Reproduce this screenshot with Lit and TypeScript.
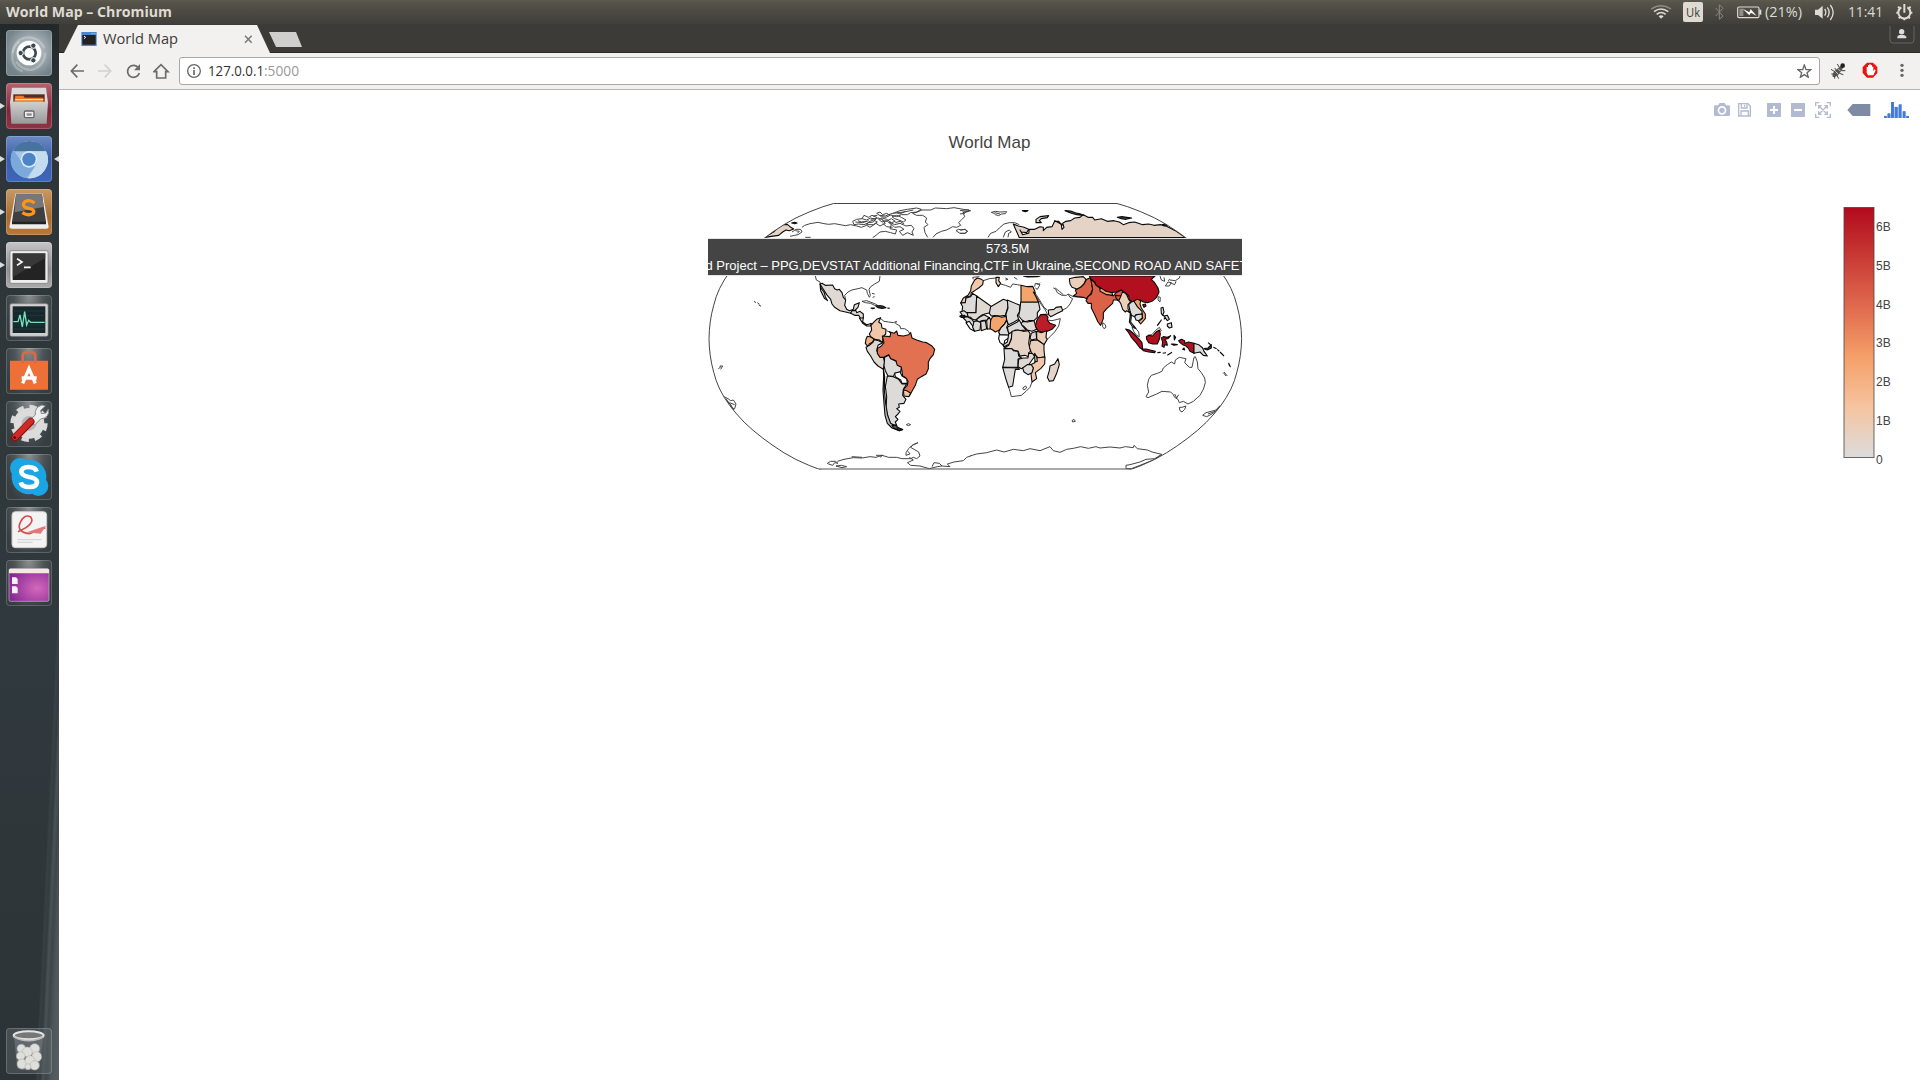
import { LitElement, html, svg, css } from "lit";
import { customElement } from "lit/decorators.js";

/* Robinson projection outline table, every 5 degrees of latitude. */
const RX = [1, .9986, .9954, .99, .9822, .973, .96, .9427, .9216, .8962, .8679, .835, .7986, .7597, .7186, .6732, .6213, .5722, .5322];
const RY = [0, .062, .124, .186, .248, .31, .372, .434, .4958, .5571, .6176, .6769, .7346, .7903, .8435, .8936, .9394, .9761, 1];

function frame(cx: number, cy: number, rx: number, ry: number) {
  const pts: string[] = [];
  for (let i = 18; i >= 0; i--) pts.push(`${cx - rx * RX[i]},${cy - ry * RY[i]}`);
  for (let i = 1; i <= 18; i++) pts.push(`${cx - rx * RX[i]},${cy + ry * RY[i]}`);
  for (let i = 18; i >= 0; i--) pts.push(`${cx + rx * RX[i]},${cy + ry * RY[i]}`);
  for (let i = 1; i <= 18; i++) pts.push(`${cx + rx * RX[i]},${cy - ry * RY[i]}`);
  return "M" + pts.join("L") + "Z";
}
const GLOBE = frame(975.3, 338.7, 266.3, 135.2);

const G = "#dcdbd9", L = "#dfd8d3", P = "#e5d3c6", N = "#eccfb9", K = "#f0c7a8", O = "#f5a46c", R = "#b2101e", I = "#db6147";
type Shape = [string, string];

const americas: Shape[] = [
  [L, "M360,42L366,40 376,46 398,45 404,56 412,60 418,58 426,68 430,82 437,90 434,106 440,118 448,122 460,118 463,104 478,98 474,112 466,120 456,124 452,130 440,127 420,122 404,112 396,102 392,88 380,74 370,58Z"],
  [L, "M360,42L364,56 372,66 376,80 383,92 374,86 368,74 362,62Z"],
  [L, "M452,130L456,122 468,122 470,128 480,124 490,132 490,144 482,146 476,136 464,136Z"],
  [G, "M478,144L490,144 488,156 500,164 508,162 514,160 512,168 500,168 488,160Z"],
  [K, "M513,166L520,158 530,148 542,143 536,156 544,162 546,174 558,178 557,192 549,200 548,218 538,210 524,208 512,200 508,192 515,180Z"],
  ["#f2b17e", "M502,199L512,201 522,207 518,216 508,222 504,230 496,220 498,208Z"],
  [L, "M498,232L508,226 518,218 523,209 536,212 548,218 534,226 530,242 540,258 550,262 554,276 550,298 534,288 522,276 512,258 502,244Z"],
  ["#e17150", "M547,198L570,200 572,190 568,185 582,190 590,183 594,196 610,198 626,194 632,188 636,204 650,210 668,216 680,218 696,228 704,238 700,254 690,266 685,276 685,296 678,312 664,320 652,328 646,346 636,364 628,378 620,368 610,358 622,346 624,334 618,324 608,318 606,304 604,292 590,286 588,272 572,266 566,254 552,262 540,262 532,250 532,236 544,228 552,218Z"],
  [G, "M554,262L566,256 572,266 588,274 592,286 604,292 602,306 584,310 580,320 564,318 556,302 552,288Z"],
  ["#fff", "M584,310L600,305 606,318 620,326 622,340 606,340 602,330 586,320Z"],
  [K, "M610,360L620,362 632,370 626,380 612,378Z"],
  [G, "M562,318L580,320 596,328 606,342 620,342 610,358 608,376 618,388 612,400 596,402 598,412 590,416 600,424 594,432 586,440 594,448 586,456 590,466 572,464 564,440 558,420 560,380 556,350Z"],
  ["#bbb", "M550,296L554,320 553,360 557,400 563,436 572,460 586,468 608,479 598,482 576,474 562,460 555,436 552,400 549,360 551,320Z"],
  ["#555", "M576,466L590,466 592,476 608,478 598,482 580,474Z"],
  ["#444", "M528,109L538,107 548,108 558,113 546,115 534,113ZM513,114L524,114 518,116ZM562,114L569,115"],
];
const americasCoast = [
  "M346,18L349,30 360,36 362,43M437,90L434,76 444,66 456,60 474,56 486,53 500,60 502,70 508,82 511,76 507,58 512,50 524,42 538,34 540,18",
  "M486,94L500,92 516,98 526,102 536,108 524,106 512,100 496,98ZM516,70L524,72M518,82L524,80",
  "M540,144L552,154 566,156 580,158 590,154 586,160 600,168 602,176 614,176 626,184 628,190M536,156L538,166 546,170M568,186L560,182",
  "M162,94L168,98M172,98L178,102M176,104L182,108 178,106M55,296L61,292 60,288 68,288 62,298",
  "M72,380L84,386 92,392 100,390 108,402 104,416 98,416 92,404 80,392M88,398L104,404M78,386L102,420",
  "M619,464L625,461 632,464 625,467Z",
  "M382,580L392,574 406,574 414,580 404,578 398,586 386,582ZM412,574L432,568 460,563 486,564 510,560 528,562 546,556 566,562 590,562 606,566 632,566 640,562 650,566 660,558 656,546 642,538 632,532 640,524 654,518M654,518L636,526 626,536 618,548 618,556 630,552 624,544M628,562L640,570 622,578 632,586 660,588 688,596 712,590 726,588 718,580 702,578 696,590M726,588L750,590 742,582 762,576 790,572 800,562 812,558",
  "M408,588L424,586 440,590 426,593ZM455,560L486,562M528,556L548,556 540,562",
];

const arctic = [
  "M270,139L284,136 294,134 306,126 302,118 288,118 276,126M286,122L298,124 292,130M306,112L314,106 330,101 354,97 372,101 386,103 404,101 420,104 436,107 452,104 470,108 484,112 500,106 510,112 528,100 540,108 556,100 548,92 562,94 574,104 570,116 590,120 586,132 572,128 556,124 540,126 528,136 518,143",
  "M458,94L470,88 486,86 500,90 512,84 526,88 520,96 506,98 492,104 476,102 462,104ZM486,86L492,76 506,82 516,76 530,82 526,90M530,70L540,66 548,74 560,70 570,76 558,82 544,80ZM506,96L500,104 520,104 532,96 520,90ZM536,88L546,96 562,92 574,86 586,94 574,98 560,88 546,84ZM576,80L590,76 604,82 618,90 610,96 596,90 584,86ZM568,96L584,104 600,100 618,108 634,106 642,116 636,126 640,136 622,128 608,136 598,124 612,118 600,110 584,112Z",
  "M566,74L584,68 600,62 622,58 650,54 664,58 650,66 632,68 622,74 604,74 590,80 576,76ZM580,70L612,66 640,60M512,88L534,84 550,90M466,96L488,98 506,92M540,76L556,78 566,74M548,100L560,110 578,112M586,98L600,94 612,102M520,78L532,76M590,68L600,72 616,64M474,92L484,96 498,94",
  "M683,142L675,128 672,112 684,104 676,96 680,84 668,76 650,76 638,70 652,66 666,60 692,60 706,54 740,56 762,53 790,58 812,62 800,66 790,70 794,80 786,88 776,98 782,106 770,112 758,110 740,120 724,124 708,132 699,142",
  "M768,122L775,118 784,120 796,118 803,124 796,130 780,130ZM316,142L332,142",
];

const north: Shape[] = [
  [P, "M160,102L175,108 192,112 206,118 200,128 184,126 180,120 188,134 206,130 208,118 224,118 240,110 250,112 250,122 260,112 276,110 284,94 296,94 304,104 306,118 312,112 308,100 318,94 332,92 344,84 360,82 370,74 384,82 398,82 404,90 424,86 442,94 462,92 478,96 490,104 506,98 524,96 548,104 566,102 582,106 602,104 618,108 646,122 676,143H178L166,116Z"],
  [P, "M228,98L228,88 240,80 266,77 262,83 244,86 238,92 244,98Z"],
  ["#555", "M315,62L332,63 346,68 362,72 370,76 350,74 334,70ZM472,82L486,80 500,82 515,84 498,88 484,86ZM187,62L204,62 196,65ZM284,92L296,98 310,106 300,100Z"],
  ["#444", "M606,104L618,102 622,106 612,108Z"],
];
const northCoast = [
  "M84,142L92,130 108,124 118,114 132,102 148,98 164,98 178,104M130,142L136,126 148,120 154,126 146,130 144,142M94,67L106,64 120,66 140,65 136,71 124,72 116,77 106,74 102,70ZM104,68L120,72",
  "M616,142L624,136 632,140M634,136L644,136 650,142M0,62L26,59 24,64 8,66 14,70 0,72M0,120L14,118 22,124 14,130 0,130",
];

const africa: Shape[] = [
  [K, "M104,30L112,24 124,28 130,32 128,44 116,54 104,62 94,68 92,78 78,82 76,98 62,99 70,84 84,76 92,62 94,48Z"],
  [G, "M62,99L76,98 78,84 92,80 98,70 110,78 108,128 82,128 66,124 68,110Z"],
  [L, "M110,78L152,108 155,112 150,128 134,132 124,136 116,142 108,150 98,148 92,142 82,140 82,128 108,128Z"],
  [L, "M152,110L166,102 190,88 202,92 204,110 196,136 180,138 164,137 154,138 148,130Z"],
  [G, "M202,90L240,106 238,126 232,136 236,148 222,156 206,164 200,152 198,132 204,114Z"],
  [G, "M242,96L295,95 300,118 292,128 292,142 282,152 266,152 256,155 246,150 236,138 240,118Z"],
  ["#e0d9d4", "M248,154L262,156 282,152 286,166 290,178 276,184 262,180 250,168 242,164Z"],
  ["#bb1c27", "M302,134L318,133 324,142 322,150 330,160 347,166 336,178 322,184 308,187 294,182 286,168 290,152 296,142Z"],
  [O, "M150,176L152,150 158,140 172,138 186,142 198,139 200,150 192,164 184,172 178,180 166,186 158,180Z"],
  ["#fcfcfc", "M178,194L206,194 208,202 194,212 192,226 180,218 176,206Z"],
  [G, "M176,186L184,172 194,162 200,150 204,164 200,172 206,188 208,195 180,194Z"],
  [G, "M202,172L216,164 232,156 238,150 246,166 258,180 240,182 226,180 214,190 206,190Z"],
  ["#dddad7", "M206,192L216,186 216,200 208,222 192,230 190,224 202,216 204,206Z"],
  [P, "M216,184L234,180 250,184 264,182 270,190 268,206 266,220 272,244 266,248 266,260 254,256 240,258 234,244 220,240 206,236 192,234 206,226 214,208Z"],
  [G, "M192,236L216,236 220,242 234,244 236,258 244,262 234,268 234,292 188,292 194,268Z"],
  [L, "M236,268L250,264 264,264 266,250 278,250 284,260 276,270 268,282 256,290 244,296 234,290Z"],
  [N, "M290,184L304,188 320,182 318,202 322,208 312,224 296,212 290,208Z"],
  [L, "M274,190L288,184 290,206 274,210 270,204Z"],
  ["#e9ceb9", "M272,212L292,210 312,224 312,240 314,260 296,264 284,256 274,248 268,230Z"],
  [K, "M288,264L315,261 314,282 302,296 286,308 290,326 276,336 273,312 280,294 272,284 284,278Z"],
  [G, "M248,294L262,284 274,284 280,294 276,308 264,314 252,306Z"],
  ["#e3d5cc", "M284,250L290,260 292,274 286,276 284,264Z"],
  [G, "M188,292L236,294 238,298 226,298 222,322 218,348 206,352 198,328Z"],
  ["#e3d5cc", "M354,266L358,284 350,310 340,332 328,334 322,322 328,302 330,288 344,282Z"],
  ["#e6d7cf", "M325,120L342,118 348,112 364,110 368,122 352,130 332,140 326,134Z"],
  [L, "M60,126L72,122 82,130 84,140 70,138 60,140 66,134Z"],
  [G, "M68,142L82,140 96,148 104,160 98,170 90,160 82,158 76,150Z"],
  ["#fff", "M78,158L88,154 98,168 104,184 90,176Z"],
  [G, "M102,154L118,152 122,160 120,180 104,184 98,172Z"],
  [L, "M108,150L118,142 132,134 146,142 142,150 126,152 118,156Z"],
  [L, "M122,154L136,152 140,176 124,182Z"],
  [L, "M140,152L148,142 152,150 150,176 142,178Z"],
  [N, "M168,22L178,22 176,32 182,40 175,50 168,38Z"],
  [O, "M243,46L262,50 278,49 284,62 286,70 280,66 288,80 295,96H243Z"],
  [N, "M250,18H300L292,20 262,21Z"],
  ["#222", "M60,138L74,136 74,142 64,142Z"],
];
const africaCoast = [
  "M206,352L210,364 214,380 230,378 244,376 258,364 270,352 276,336M248,354L257,348 260,354 252,360Z",
  "M176,186L180,196 176,206 192,232M322,150L336,152 361,146 356,168 344,186 330,200 322,208",
  "M182,42L196,46 212,52 218,42 232,44 243,46M130,32L148,26 168,24M100,28L98,22 118,20M196,24L204,28 196,30M222,22L232,28",
  "M280,66L290,80 304,104 316,120 324,136M286,70L300,92 312,112 322,120M284,50L286,40 296,42 300,38M340,54L346,56 352,68 366,76 380,76 384,72 390,82 398,86 390,102 380,114 368,120M346,54L358,64 370,74M384,72L400,80 440,82M286,54L292,58 300,44 290,42",
];

const asia: Shape[] = [
  [R, "M88,18H285L274,28 284,38 294,54 297,66 290,82 276,94 262,98 250,96 240,90 228,92 218,96 208,90 206,78 196,68 184,60 168,66 154,68 134,62 118,52 108,46 104,36 92,28Z"],
  [N, "M28,26L46,22 70,20 78,28 72,42 62,52 52,58 36,52 30,42Z"],
  [I, "M90,24L104,38 96,46 98,58 92,72 84,80 80,86 70,82 52,80 40,78 50,70 46,60 62,52 72,42 80,28Z"],
  [I, "M92,28L104,38 108,46 120,54 134,66 152,74 160,78 168,68 184,60 190,68 182,80 176,92 170,90 160,90 158,100 140,116 130,128 130,146 122,166 114,156 104,134 94,114 94,100 84,100 78,92 84,80 94,72 98,58 96,46Z"],
  [O, "M120,52L138,64 156,68 158,76 140,74 120,64Z"],
  [I, "M166,76L184,78 184,86 176,92 168,84Z"],
  [N, "M188,64L200,74 206,88 212,96 204,104 204,116 210,128 200,122 196,126 188,118 182,100 176,92 182,80Z"],
  [O, "M220,94L232,88 242,92 240,102 244,114 256,132 256,146 242,162 236,154 248,144 246,130 236,118 228,106Z"],
  [G, "M206,104L214,96 222,94 232,110 246,124 246,132 236,136 228,134 224,140 214,136 210,122Z"],
  [G, "M224,140L230,134 246,132 247,144 236,152 228,150Z"],
  [G, "M211,126L214,140 212,156 222,168 228,176 216,168 208,156 210,142Z"],
  [R, "M248,104L256,102 258,108 252,112ZM197,177L208,180 222,192 236,206 246,218 248,238 240,234 228,218 214,202 206,188ZM245,237L258,237 270,240 286,244 284,248 266,246 250,242ZM292,248L302,247M308,250L318,248M322,256L336,247M259,200L266,196 278,198 288,186 298,180 301,192 298,208 292,222 278,222 266,218 260,208ZM304,204L310,200 322,202 332,197 324,206 314,208 320,216 322,226 314,224 312,232 306,228 308,216ZM334,222L340,222 352,224 342,226ZM342,196L347,202 343,210ZM356,212L364,208 374,212 374,220 386,216 402,220 402,250 390,244 386,236 378,228 368,224 360,218Z"],
  [G, "M402,220L416,224 428,234 432,244 442,258 430,256 420,246 402,250Z"],
  [L, "M303,114L309,112 312,126 308,136 304,130ZM312,138L322,136 328,148 322,152ZM322,162L334,158 336,172 328,174 322,168ZM308,134L316,142 312,148"],
  ["#444", "M432,236L444,234 454,224 454,234 442,240ZM444,218L452,224 454,230M460,232L470,236M472,238L478,244M480,246L492,258M506,280L511,290 508,286ZM292,166L304,150 296,162ZM368,238L372,234 374,240Z"],
];
const asiaCoast = [
  "M128,158L136,164 138,172 132,176 128,170ZM216,172L228,176 236,186 238,200 230,196 222,186ZM264,196L276,194 286,182 298,172 304,182 298,186M295,80L301,82 300,96 294,90ZM300,18L304,30 314,34 312,22M316,48L324,36 334,38 328,48ZM330,30L346,32 358,24 360,18M330,38L344,44 348,34M324,32L330,28M490,308L498,318M492,306L502,318",
  "M258,380L266,366 262,346 266,328 274,316 292,310 306,304 310,294 322,284 334,276 344,282 346,270 358,262 378,266 374,278 388,292 396,292 402,262 406,260 412,276 414,296 424,308 434,324 436,338 430,358 420,376 400,394 384,402 370,394 358,398 354,388 344,382 340,374 332,366 306,364 290,372 276,378 264,383ZM344,372L350,384 356,374",
  "M358,412L366,412 378,408 374,418 366,426 360,422ZM428,436L438,428 454,424 468,420 480,407 472,420 456,432 440,440ZM444,432L466,424M36,452L42,448 46,454 38,456Z",
  "M-270,558L-250,552 -220,548 -190,540 -168,546 -140,538 -110,542 -90,536 -60,542 -30,530 -20,542 0,547 20,538 40,535 62,530 85,535 108,530 120,534 150,531 180,534 196,530 220,533 222,526 232,536 262,540 276,546 305,553 284,566 258,568 240,576 210,584 198,586 198,596 214,596 240,586 280,570 305,555",
];

const layer = (x: number, y: number, shapes: Shape[], coast: string[]) => svg`
  <g transform="translate(${x} ${y}) scale(0.33333)">
    ${coast.map((d) => svg`<path class="coast" d=${d}></path>`)}
    ${shapes.map(([f, d]) => svg`<path class="land" fill=${f} d=${d}></path>`)}
  </g>`;

/* Text fitted to a fixed advance width. */
const label = (w: number, h: number, base: number, size: number, text: string, fill: string, weight = 400) => html`
  <svg class="label" width=${w} height=${h}><text x="0" y=${base} font-size=${size} font-weight=${weight} fill=${fill} textLength=${w} lengthAdjust="spacingAndGlyphs">${text}</text></svg>`;

const icon = (w: number, h: number, body: unknown) => html`<svg width=${w} height=${h} viewBox="0 0 ${w * 3} ${h * 3}">${body}</svg>`;

const launchers: { cls: string; run?: boolean; active?: boolean; art: unknown }[] = [
  { cls: "dash", art: svg`
    <g fill="none" stroke="#fff" stroke-opacity=".25" stroke-width="7"><path d="M20,70C20,20 90,0 115,55"></path><path d="M118,68C116,118 60,140 30,95"></path><path d="M50,125C10,110 10,60 40,35"></path></g>
    <circle cx="69" cy="69" r="37" fill="#fff"></circle><circle cx="70" cy="69" r="19" fill="none" stroke="#3b4a50" stroke-width="8"></circle>
    <g fill="#3b4a50" stroke="#fff" stroke-width="3"><circle cx="44" cy="69" r="8"></circle><circle cx="82" cy="47" r="8"></circle><circle cx="82" cy="91" r="8"></circle></g>` },
  { cls: "files", run: true, art: svg`
    <defs><linearGradient id="silver" x2="0" y2="1"><stop stop-color="#d0d0d0"></stop><stop offset="1" stop-color="#999"></stop></linearGradient></defs>
    <path d="M18,14H120L126,60H12Z" fill="#d9d9d9"></path><rect x="22" y="34" width="94" height="30" fill="#5b2a1c"></rect><path d="M24,60L28,38H52L56,44H112V60Z" fill="#e8792f"></path><path d="M28,50H112" stroke="#ffd9a5" stroke-width="4"></path>
    <path d="M12,56H126L122,122H16Z" fill="url(#silver)"></path><rect x="55" y="84" width="29" height="20" rx="4" fill="#eee" stroke="#666" stroke-width="4"></rect><rect x="62" y="91" width="15" height="7" fill="#888"></rect>` },
  { cls: "chromium", run: true, active: true, art: svg`
    <circle cx="70" cy="71" r="56" fill="#a5c6e6"></circle><path d="M20,46A56,56 0 0 1 120,46Z" fill="#47749f"></path><path d="M22,42A56,56 0 0 0 62,126L88,90L46,76Z" fill="#7ba9dc"></path><path d="M72,46L120,46A56,56 0 0 1 66,127L94,80Z" fill="#c3dcf0"></path>
    <circle cx="69" cy="70" r="25" fill="#dbe8f5"></circle><circle cx="69" cy="70" r="20" fill="#4c84c8"></circle>` },
  { cls: "sublime", run: true, art: svg`
    <path d="M28,14H110L128,114Q128,119 120,119H18Q10,119 10,114Z" fill="#eee"></path><path d="M30,16H108L120,98Q120,104 114,104H24Q18,104 18,98Z" fill="#3f3f3f"></path><path d="M30,16H108L113,54L26,70Z" fill="#777"></path><path d="M18,102H120" stroke="#222" stroke-width="7"></path>
    <path d="M86,42Q70,30 57,38Q46,49 60,56L76,60Q89,66 80,74Q66,82 49,71" fill="none" stroke="#ff9416" stroke-width="10"></path>` },
  { cls: "terminal", run: true, art: svg`
    <rect x="12" y="26" width="114" height="98" rx="5" fill="#eee" stroke="#777" stroke-width="2"></rect><rect x="20" y="34" width="98" height="80" fill="#232323"></rect><path d="M20,34H118V48L20,106Z" fill="#444" opacity=".65"></path>
    <path d="M33,50L48,60L33,70" fill="none" stroke="#fff" stroke-width="5"></path><path d="M54,76H74" stroke="#fff" stroke-width="5"></path>` },
  { cls: "glass", art: svg`
    <rect x="12" y="26" width="114" height="98" rx="5" fill="#cfcfcf" stroke="#888" stroke-width="2"></rect><rect x="20" y="34" width="98" height="80" fill="#16282b"></rect><path d="M20,48H118M20,62H118M20,90H118M20,102H118" stroke="#294044" stroke-width="2"></path>
    <path d="M22,80H36L42,60L49,96L56,50L62,90L68,76L74,82H116" fill="none" stroke="#6fe3c0" stroke-width="4"></path>` },
  { cls: "glass", art: svg`
    <path d="M12,38H126V125H12Z" fill="#ec7038"></path><path d="M50,46V24Q50,12 69,12Q88,12 88,24V46" fill="none" stroke="#d96a45" stroke-width="8"></path>
    <path d="M50,106L69,62L88,106M47,90H92" fill="none" stroke="#fff" stroke-width="10"></path>` },
  { cls: "glass", art: svg`
    <circle cx="69" cy="67" r="46" fill="#d9d9d9" stroke="#d9d9d9" stroke-width="20" stroke-dasharray="20 16.1"></circle><circle cx="69" cy="67" r="44" fill="#dcdcdc"></circle><circle cx="69" cy="67" r="22" fill="#b6b6b6"></circle>
    <path d="M70,58L88,42Q84,20 108,12L118,15L104,28L106,38L120,36L127,24Q132,50 104,54L86,72Z" fill="#eee" stroke="#888" stroke-width="3"></path><path d="M27,110L74,62" stroke="#8c1010" stroke-width="23" stroke-linecap="round"></path><path d="M27,109L74,61" stroke="#cf2a24" stroke-width="17" stroke-linecap="round"></path><circle cx="26" cy="110" r="4" fill="#500"></circle>` },
  { cls: "glass", art: svg`
    <circle cx="69" cy="69" r="52" fill="#1aa5e5"></circle><circle cx="42" cy="42" r="30" fill="#1aa5e5"></circle><circle cx="97" cy="96" r="30" fill="#1aa5e5"></circle>
    <path d="M92,53Q88,39 68,39Q47,39 46,53Q46,64 69,69Q93,73 93,85Q91,99 70,99Q48,99 44,85" fill="none" stroke="#fff" stroke-width="14"></path>` },
  { cls: "glass", art: svg`
    <rect x="18" y="14" width="104" height="108" rx="10" fill="#f3f3f3" stroke="#ccc" stroke-width="3"></rect><path d="M34,98H106M34,106H80" stroke="#d5d5d5" stroke-width="4"></path>
    <path d="M36,74Q90,50 74,30Q56,20 44,44Q28,74 70,80L118,62" fill="none" stroke="#d8494d" stroke-width="5"></path><path d="M62,76L120,56L104,80Z" fill="#e4777a"></path>` },
  { cls: "glass", art: svg`
    <defs><radialGradient id="violet" cx=".7" cy=".6" r=".8"><stop stop-color="#d568bb"></stop><stop offset="1" stop-color="#7d2290"></stop></radialGradient></defs>
    <rect x="9" y="26" width="120" height="98" rx="5" fill="url(#violet)" stroke="#c9b7cf" stroke-width="2"></rect><path d="M9,40V30Q9,26 14,26H124Q129,26 129,30V40Z" fill="#f0ecdd"></path>
    <path d="M18,52H30L35,57V72H18ZM18,79H30L35,84V100H18Z" fill="#f6f0f7"></path>` },
];

const trash = svg`
  <path d="M24,26L34,122Q68,132 100,122L112,26Z" fill="#aab" opacity=".3"></path><ellipse cx="68" cy="22" rx="45" ry="12" fill="#777" stroke="#e4e4e4" stroke-width="6"></ellipse><path d="M23,26Q68,50 113,26" fill="none" stroke="#bbb" stroke-width="5"></path>
  <g fill="#dededa" stroke="#aaa" stroke-width="1.5"><circle cx="46" cy="62" r="13"></circle><circle cx="86" cy="62" r="15"></circle><circle cx="64" cy="72" r="15"></circle><circle cx="44" cy="84" r="13"></circle><circle cx="92" cy="86" r="15"></circle><circle cx="48" cy="108" r="15"></circle><circle cx="72" cy="98" r="15"></circle><circle cx="86" cy="112" r="14"></circle><circle cx="66" cy="116" r="9"></circle></g>`;

const TICKS = ["6B", "5B", "4B", "3B", "2B", "1B", "0"];

@customElement("app-root")
export class AppRoot extends LitElement {
  static styles = css`
    :host { display: block; width: 1920px; height: 1080px; overflow: hidden; font-family: "Liberation Sans", sans-serif; background: #fff; }
    svg { display: block; flex: none; }
    .screen { display: flex; flex-direction: column; height: 1080px; }
    .panel { height: 24px; flex: none; display: flex; justify-content: space-between; background: linear-gradient(#5d5b4f 0, #55534a 3px, #403f3a 23px); padding-left: 6px; }
    .label { font-family: "Open Sans", sans-serif; overflow: visible; }
    .indicators { display: grid; grid-template-columns: 32px 32px 22px 28px 50px 33px 48px 24px; }
    .layout-key { width: 20px; height: 20px; margin-top: 2px; background: #dfdbd2; border-radius: 2px; display: flex; justify-content: center; }
    .desk { flex: 1; display: flex; min-height: 0; }
    .dock { width: 59px; box-sizing: border-box; flex: none; display: flex; flex-direction: column; gap: 7px; padding: 6px 0 6px; background:
      linear-gradient(92.7deg, transparent 71%, #47515560 73%, #3d474b60 77%, #596367a0 80%, #4a535790 84%, #626b6fa0 90%, #566064 100%) 0 100% / 59px 480px no-repeat,
      linear-gradient(#23282a, #2d3538 8%, #30393d 60%, #2b3336); }
    .slot { height: 46px; display: grid; grid-template-columns: 6px 46px 7px; align-items: center; }
    .pip { width: 0; height: 0; border: 3.5px solid transparent; border-right: 0; border-left: 5px solid #ddd; }
    .pip.here { border: 3.5px solid transparent; border-left: 0; border-right: 5px solid #ddd; grid-column: 3; margin-left: 2px; }
    .tile { width: 46px; height: 46px; border-radius: 4px; overflow: hidden; grid-column: 2; box-shadow: inset 0 0 0 1px #ffffff30; }
    .dash { background: radial-gradient(circle at 55% 45%, #cdd4d6, #74838a 75%); }
    .files { background: linear-gradient(#b4646e, #82263a 60%, #8d3544); }
    .chromium { background: linear-gradient(#6d8ac4, #3c5fab 50%, #3e67b8); }
    .sublime { background: linear-gradient(#c79a68, #a86c2d 60%, #b97a38); }
    .terminal { background: linear-gradient(#c5c5c8, #8f8f92 60%, #aaa); }
    .glass { background: radial-gradient(ellipse at 50% 0, #8a8f91 0, #4d5457 45%, #363e41 80%); }
    .bin { margin-top: auto; }
    .bin .glass { background: linear-gradient(#737a7d60, #60686b70); }
    .browser { flex: 1; display: flex; flex-direction: column; min-width: 0; }
    .tabs { height: 29px; flex: none; background: linear-gradient(#3c3b37 28px, #2a2926 28px); display: flex; justify-content: space-between; }
    .strip { display: flex; }
    .tab { display: grid; grid-template-columns: 22px 22px 141px 33px; width: 218px; background: #f2f1f0; clip-path: polygon(5px 29px, 19px 1px, 198px 1px, 211px 29px); }
    .tab svg:first-child { grid-column: 2; }
    .newtab { width: 33px; height: 15px; margin: 8px 0 0 -8px; background: #d0cfcd; clip-path: polygon(0 0, 27px 0, 100% 100%, 7px 100%); }
    .tools { height: 37px; box-sizing: border-box; flex: none; background: #f2f1f0; border-bottom: 1px solid #b6b4b2; display: flex; align-items: flex-start; padding-top: 4px; }
    .nav { display: grid; grid-template-columns: 28px 28px 27px 26px; padding: 6px 0 0 11px; }
    .omnibox { box-sizing: border-box; width: 1641px; height: 28px; border: 1px solid #a9a7a5; border-radius: 3px; background: #fff; display: flex; align-items: center; padding: 0 7px; }
    .omnibox .host { margin-left: 7px; }
    .star { margin-left: auto; }
    .ext { display: grid; grid-template-columns: 32px 38px 20px; padding: 5px 0 0 10px; }
    .page { flex: 1; background: #fff; }
    .modebar { display: grid; grid-template-columns: 24px 29px 24px 24px 32px 37px 36px; justify-content: end; padding-top: 12px; height: 16px; }
    .heading { margin: 15px 0 0; text-align: center; font-size: 17px; font-weight: 400; line-height: 20px; height: 20px; color: #444; }
    .plot { display: flex; justify-content: space-between; margin: 37px 0 0 641px; }
    .coast { fill: none; stroke: #444; stroke-width: 3; stroke-linejoin: round; }
    .land { stroke: #0a0a0a; stroke-width: 3.3; stroke-linejoin: round; }
    .hover { font-size: 13px; fill: #fff; }
    .ticks { font-size: 12px; fill: #444; }
  `;

  render() {
    return html`
      <div class="screen">
        <div class="panel">
          ${label(166, 24, 17, 14.5, "World Map – Chromium", "#dfdbd2", 700)}
          <div class="indicators">
            ${icon(21, 24, svg`<g fill="none" stroke-width="4.5"><path d="M1,27Q30,7 60,27" stroke="#8f8d85"></path><path d="M9,35Q30,19 52,35" stroke="#dfdbd2"></path><path d="M17,43Q30,32 44,43" stroke="#dfdbd2"></path></g><path d="M23,49Q30,43 38,49L30,56Z" fill="#dfdbd2"></path>`)}
            <div class="layout-key">${label(14, 20, 15, 13.5, "Uk", "#3c3b37", 500)}</div>
            ${icon(9, 24, svg`<path d="M2,24L24,48L13,58V14L24,25L2,48" fill="none" stroke="#8a8880" stroke-width="3"></path>`)}
            ${icon(25, 24, svg`<rect x="2" y="21" width="64" height="32" rx="4" fill="none" stroke="#dfdbd2" stroke-width="3.5"></rect><rect x="67" y="29" width="6" height="15" fill="#dfdbd2"></rect><rect x="7" y="26" width="12" height="22" fill="#908e86"></rect><path d="M17,26L37,37L41,27L59,48L42,38L37,46Z" fill="#fff"></path>`)}
            ${label(37, 24, 17, 14.5, "(21%)", "#dfdbd2")}
            ${icon(21, 24, svg`<path d="M0,29H9L23,17V56L9,45H0Z" fill="#dfdbd2"></path><path d="M29,27Q36,37 29,47M37,22Q48,37 37,52M46,15Q63,37 46,60" fill="none" stroke="#dfdbd2" stroke-width="4"></path>`)}
            ${label(35, 24, 17, 14.5, "11:41", "#dfdbd2")}
            ${icon(17, 24, svg`<path d="M16,22A18,18 0 1 0 34,22" fill="none" stroke="#dfdbd2" stroke-width="6"></path><path d="M25,12V38M6,20L12,25M44,20L38,25M1,38H8M42,38H49M8,55L14,50M42,55L36,50M25,54V61" stroke="#dfdbd2" stroke-width="6"></path>`)}
          </div>
        </div>
        <div class="desk">
          <div class="dock">
            ${launchers.map((l) => html`<div class="slot">
              ${l.run ? html`<i class="pip"></i>` : ""}
              <div class="tile ${l.cls}"><svg width="46" height="46" viewBox="0 0 138 138">${l.art}</svg></div>
              ${l.active ? html`<i class="pip here"></i>` : ""}
            </div>`)}
            <div class="slot bin"><div class="tile glass"><svg width="46" height="46" viewBox="0 0 138 138">${trash}</svg></div></div>
          </div>
          <div class="browser">
            <div class="tabs">
              <div class="strip">
                <div class="tab">
                  ${icon(17, 28, svg`<rect x="1" y="24" width="46" height="42" fill="#4a86cf"></rect><rect x="4" y="33" width="40" height="29" fill="#222"></rect><path d="M9,36L14,40L9,44" fill="none" stroke="#fff" stroke-width="3"></path><path d="M30,29H44" stroke="#e88" stroke-width="3"></path>`)}
                  ${label(75, 28, 20, 15, "World Map", "#3c3b37")}
                  ${icon(9, 28, svg`<path d="M3,35L23,56M23,35L3,56" stroke="#777" stroke-width="4.5"></path>`)}
                </div>
                <div class="newtab"></div>
              </div>
              <svg width="31" height="20" viewBox="0 0 93 60"><path d="M3,6V48Q3,57 12,57H66Q75,57 75,48V6" fill="#3c3b37" stroke="#66655f" stroke-width="3"></path><circle cx="38" cy="23" r="8" fill="#ddd"></circle><path d="M25,43V38Q27,32 38,32Q49,32 52,38V43Z" fill="#ddd"></path></svg>
            </div>
            <div class="tools">
              <div class="nav">
                ${icon(14, 16, svg`<path d="M22,5L4,24L22,43M4,24H42" fill="none" stroke="#6b6b6b" stroke-width="5"></path>`)}
                ${icon(14, 16, svg`<path d="M20,5L38,24L20,43M38,24H0" fill="none" stroke="#d2d1d0" stroke-width="5"></path>`)}
                ${icon(15, 16, svg`<path d="M36,13A18,18 0 1 0 40,30" fill="none" stroke="#6b6b6b" stroke-width="5"></path><path d="M42,3V22H24Z" fill="#6b6b6b"></path>`)}
                ${icon(17, 16, svg`<path d="M3,26L24,5L45,26H38V45H11V26Z" fill="none" stroke="#6b6b6b" stroke-width="5"></path>`)}
              </div>
              <div class="omnibox">
                ${icon(14, 14, svg`<circle cx="21" cy="21" r="19" fill="none" stroke="#666" stroke-width="4"></circle><path d="M21,18V33M21,10V15" stroke="#666" stroke-width="5"></path>`)}
                <div class="host">${label(56, 26, 18, 14, "127.0.0.1", "#333")}</div>
                ${label(35, 26, 18, 14, ":5000", "#999")}
                <div class="star">${icon(15, 14, svg`<path d="M22,3L27,17L41,17L30,26L34,40L22,32L10,40L14,26L3,17L17,17Z" fill="none" stroke="#666" stroke-width="4"></path>`)}</div>
              </div>
              <div class="ext">
                ${icon(17, 17, svg`<path d="M8,44Q6,30 22,20L32,12Q42,14 36,24L24,40Q14,48 8,44Z" fill="#555"></path><path d="M3,22L16,30M4,36H14M14,18L20,26M26,50L20,38M40,38L28,34M46,26L34,26M14,50V42M22,6L28,16" stroke="#444" stroke-width="3"></path><circle cx="38" cy="11" r="7" fill="#222"></circle><path d="M16,28L24,36M24,20L32,28" stroke="#ccc" stroke-width="3"></path>`)}
                ${icon(17, 17, svg`<path d="M15,2H33L46,15V33L33,47H15L2,33V15Z" fill="#e11"></path><path d="M14,26V15H18V9H22V7H26V9H30V14H34V28L38,22L41,25L34,40H18L14,32Z" fill="#fff"></path>`)}
                ${icon(5, 17, svg`<circle cx="6" cy="10" r="5" fill="#666"></circle><circle cx="6" cy="25" r="5" fill="#666"></circle><circle cx="6" cy="40" r="5" fill="#666"></circle>`)}
              </div>
            </div>
            <div class="page">
              <div class="modebar">
                ${icon(16, 16, svg`<path d="M4,10H12L17,3H32L36,10H44Q48,10 48,14V38Q48,42 44,42H4Q0,42 0,38V14Q0,10 4,10Z" fill="#b2bbd1"></path><circle cx="24" cy="25" r="10.500" fill="#b2bbd1" stroke="#fff" stroke-width="5"></circle>`)}
                ${icon(14, 16, svg`<path d="M2,5H30L37,12V42H2Z" fill="none" stroke="#b2bbd1" stroke-width="4"></path><path d="M10,5V18H27V5M20,8V14M9,42V27H31V42" fill="none" stroke="#b2bbd1" stroke-width="4"></path>`)}
                ${icon(14, 16, svg`<rect y="3" width="42" height="42" fill="#b2bbd1"></rect><path d="M21,12V36M9,24H33" stroke="#fff" stroke-width="6"></path>`)}
                ${icon(14, 16, svg`<rect y="3" width="42" height="42" fill="#b2bbd1"></rect><path d="M9,24H33" stroke="#fff" stroke-width="6"></path>`)}
                ${icon(16, 16, svg`<path d="M2,13V2H13M35,2H46V13M46,35V46H35M13,46H2V35M12,12L36,36M36,12L12,36M11,20V11H20M28,11H37V20M37,28V37H28M20,37H11V28" fill="none" stroke="#b2bbd1" stroke-width="4"></path>`)}
                ${icon(24, 16, svg`<path d="M1,24L17,6H70V42H17Z" fill="#7f8ba5"></path>`)}
                ${icon(26, 16, svg`<path d="M0,41H9V48H0ZM66,41H75V48H66ZM9,36H20V48H9ZM56,28H66V48H56ZM30,14H44V48H30Z" fill="#a9c1ee"></path><path d="M0,42H8V48H0ZM11,34H19V48H11ZM21,0H30V48H21ZM33,15H41V48H33ZM44,7H53V48H44ZM56,28H64V48H56ZM67,42H75V48H67Z" fill="#447adb"></path>`)}
              </div>
              <h1 class="heading">World Map</h1>
              <div class="plot">
                <svg width="560" height="290" viewBox="700 190 560 290">
                  <defs>
                    <clipPath id="globe"><path d=${GLOBE}></path></clipPath>
                    <clipPath id="pane"><rect x="700" y="190" width="560" height="279.500"></rect></clipPath>
                    <clipPath id="tip"><rect x="708" y="236" width="534" height="42"></rect></clipPath>
                  </defs>
                  <g clip-path="url(#pane)">
                    <g clip-path="url(#globe)">
                      ${layer(700, 190, [[P, "M190,143L222,125 234,112 248,104 262,103 270,110 281,117 268,122 258,120 248,126 236,136 214,139Z"], ["#444", "M275,99L284,97 291,99 284,101Z"]], arctic)}
                      ${layer(960, 190, north, northCoast)}
                      ${layer(700, 270, americas, americasCoast)}
                      ${layer(940, 270, africa, africaCoast)}
                      ${layer(1060, 270, asia, asiaCoast)}
                    </g>
                    <path d=${GLOBE} fill="none" stroke="#444" stroke-width="1"></path>
                  </g>
                  <path d="M819,469H1131.500" stroke="#555" stroke-width="1.200"></path>
                  <rect x="708" y="238" width="534" height="38" fill="#e4e4e4"></rect>
                  <rect x="708" y="239" width="534" height="36" fill="#444"></rect>
                  <g class="hover" clip-path="url(#tip)">
                    <text x="1007.700" y="253.300" text-anchor="middle">573.5M</text>
                    <text x="705.500" y="270.300">d Project – PPG,DEVSTAT Additional Financing,CTF in Ukraine,SECOND ROAD AND SAFETY</text>
                  </g>
                </svg>
                <svg width="77" height="290" viewBox="0 0 77 290">
                  <defs><linearGradient id="scale" x2="0" y2="1"><stop stop-color="#b20a1c"></stop><stop offset=".4" stop-color="#e06b4e"></stop><stop offset=".6" stop-color="#f5a069"></stop><stop offset=".8" stop-color="#f5c4a0"></stop><stop offset="1" stop-color="#dcdcdc"></stop></linearGradient></defs>
                  <rect x="1" y="17.500" width="30" height="250" fill="url(#scale)" stroke="#444" stroke-opacity=".8"></rect>
                  <g class="ticks">${TICKS.map((t, i) => svg`<text x="33" y=${41 + i * 38.75}>${t}</text>`)}</g>
                </svg>
              </div>
            </div>
          </div>
        </div>
      </div>`;
  }
}
